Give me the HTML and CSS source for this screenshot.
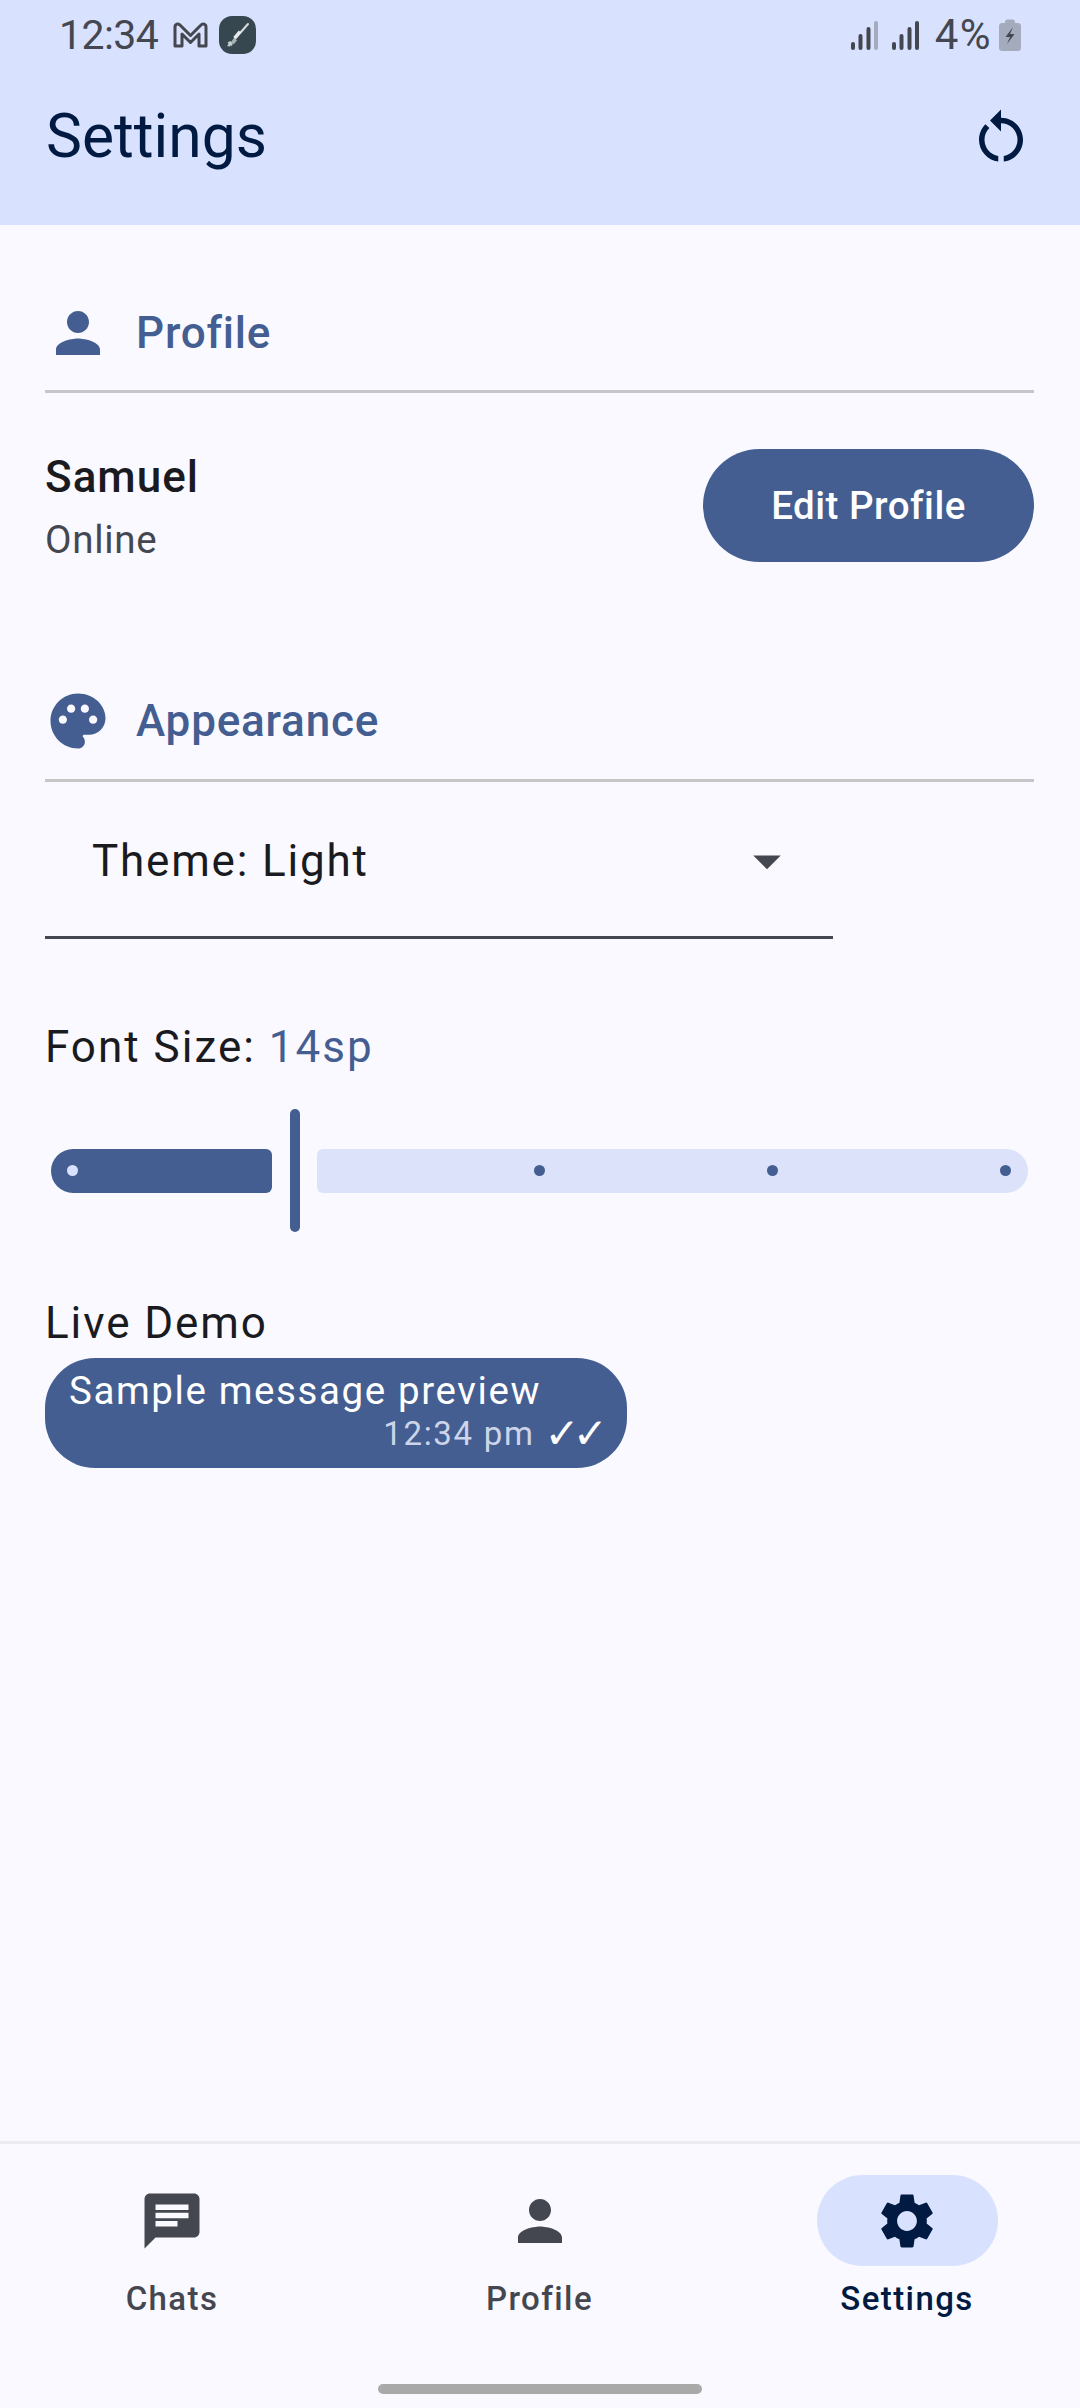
FILE: index.html
```html
<!DOCTYPE html>
<html lang="en">
<head>
<meta charset="utf-8">
<title>Settings</title>
<link rel="stylesheet" href="styles.css">
</head>
<body>
<div class="screen">
  <header class="header">
    <div class="status">
      <div class="status-left">
        <span class="clock">12:34</span>
        <svg class="gmail" viewBox="0 0 35 26"><path d="M2 24V5c0-2.800 3.200-4 5-2l10.500 10.500L28 3c1.800-2 5-.8 5 2v19h-7V12l-8.500 8.500L9 12v12z" fill="none" stroke="#44474f" stroke-width="3" stroke-linejoin="round"/></svg>
        <svg class="rocket" viewBox="0 0 37 38"><rect x="0" y="0" width="37" height="38" rx="13" fill="#37474f"/><path d="M29 8L14.500 24.500" stroke="#d5dcdc" stroke-width="2" stroke-linecap="round"/><path d="M21 15.500L15.500 22" stroke="#e8ecec" stroke-width="3.200"/><path d="M15.500 22l-3.500 4 2.500 2.500 3.500-4z" fill="#a5b2b2"/><path d="M11.500 25l-3 1.500 1 1.500-1.500 2 3 .5 1-1.500 1 1.500.5-3z" fill="#c3cece"/></svg>
      </div>
      <div class="status-right">
        <svg class="signal signal-first" viewBox="0 0 27 29"><rect x="0" y="21" width="4" height="8" rx="2" fill="#44474f"/><rect x="7.500" y="13" width="4" height="16" rx="2" fill="#44474f"/><rect x="15.500" y="6" width="4" height="23" rx="2" fill="#44474f"/><rect x="23" y="0" width="4" height="29" rx="2" fill="#a3abbd"/></svg>
        <svg class="signal" viewBox="0 0 27 29"><rect x="0" y="21" width="4" height="8" rx="2" fill="#44474f"/><rect x="7.500" y="13" width="4" height="16" rx="2" fill="#44474f"/><rect x="15.500" y="6" width="4" height="23" rx="2" fill="#44474f"/><rect x="23" y="0" width="4" height="29" rx="2" fill="#44474f"/></svg>
        <span class="percent">4%</span>
        <svg class="battery" viewBox="0 0 22 32"><path d="M6 3c0-1.500 1-2.500 2.500-2.500h5C15 .5 16 1.500 16 3v1h3c1.500 0 3 1.200 3 3v22c0 1.700-1.300 3-3 3H3c-1.700 0-3-1.300-3-3V7c0-1.800 1.500-3 3-3h3z" fill="#a3abbd"/><path d="M14 8l-7.500 10h4.500l-3 7 7.500-10H11z" fill="#44474f"/></svg>
      </div>
    </div>
    <div class="appbar">
      <h1 class="title">Settings</h1>
      <svg class="icon" viewBox="0 0 24 24"><path fill="#001a41" d="M12 5V2L8 6l4 4V7c3.310 0 6 2.690 6 6 0 2.970-2.170 5.430-5 5.910v2.020c3.950-.49 7-3.850 7-7.930 0-4.420-3.580-8-8-8zm-6 8c0-1.650.67-3.150 1.760-4.240L6.340 7.340C4.900 8.790 4 10.790 4 13c0 4.080 3.050 7.440 7 7.930v-2.020c-2.830-.48-5-2.940-5-5.910z"/></svg>
    </div>
  </header>

  <main class="content">
    <section class="section-head">
      <svg class="icon" viewBox="0 0 24 24"><path fill="#445e91" d="M12 12c2.210 0 4-1.790 4-4s-1.790-4-4-4-4 1.790-4 4 1.790 4 4 4zm0 2c-2.670 0-8 1.340-8 4v2h16v-2c0-2.660-5.330-4-8-4z"/></svg>
      <h2 class="section-title">Profile</h2>
    </section>
    <div class="divider"></div>
    <div class="profile-row">
      <div class="profile-text">
        <div class="profile-name">Samuel</div>
        <div class="profile-status">Online</div>
      </div>
      <button class="edit-button">Edit Profile</button>
    </div>

    <section class="section-head section-head-second">
      <svg class="icon" viewBox="0 0 24 24"><path fill="#445e91" fill-rule="evenodd" d="M12 2C6.490 2 2 6.490 2 12s4.490 10 10 10c1.380 0 2.500-1.120 2.500-2.500 0-.61-.23-1.200-.64-1.670-.08-.1-.13-.21-.13-.33 0-.28.22-.5.5-.5H16c3.310 0 6-2.690 6-6 0-4.960-4.490-9-10-9zm-5.500 11c-.83 0-1.500-.67-1.500-1.500S5.670 10 6.500 10s1.500.67 1.500 1.500S7.330 13 6.500 13zm3-4C8.670 9 8 8.330 8 7.500S8.670 6 9.500 6s1.500.67 1.500 1.500S10.330 9 9.500 9zm5 0c-.83 0-1.500-.67-1.500-1.500S13.670 6 14.500 6s1.500.67 1.500 1.500S15.330 9 14.500 9zm3 4c-.83 0-1.500-.67-1.500-1.500s.67-1.500 1.500-1.500 1.500.67 1.500 1.500-.67 1.500-1.500 1.500z"/></svg>
      <h2 class="section-title">Appearance</h2>
    </section>
    <div class="divider divider-second"></div>
    <div class="select">
      <span class="select-text">Theme: Light</span>
      <svg class="icon" viewBox="0 0 24 24"><path fill="#44474f" d="M7 10l5 5 5-5z"/></svg>
    </div>

    <div class="font-label">Font Size: <span class="font-value">14sp</span></div>
    <div class="slider">
      <div class="track-active"><span class="tick tick-light"></span></div>
      <div class="thumb"></div>
      <div class="track-inactive"><span class="tick"></span><span class="tick"></span><span class="tick"></span></div>
    </div>

    <div class="demo-label">Live Demo</div>
    <div class="bubble">
      <div class="bubble-text">Sample message preview</div>
      <div class="bubble-meta"><span class="bubble-time">12:34 pm</span><span class="bubble-check">✓✓</span></div>
    </div>
  </main>

  <nav class="nav">
    <div class="nav-items">
      <div class="nav-item">
        <div class="nav-pill">
          <svg class="icon" viewBox="0 0 24 24"><path fill="#44474f" d="M20 2H4c-1.100 0-1.990.9-1.990 2L2 22l4-4h14c1.100 0 2-.9 2-2V4c0-1.100-.9-2-2-2zM6 9h12v2H6V9zm8 5H6v-2h8v2zm4-6H6V6h12v2z"/></svg>
        </div>
        <span class="nav-label">Chats</span>
      </div>
      <div class="nav-item">
        <div class="nav-pill">
          <svg class="icon" viewBox="0 0 24 24"><path fill="#44474f" d="M12 12c2.210 0 4-1.790 4-4s-1.790-4-4-4-4 1.790-4 4 1.790 4 4 4zm0 2c-2.670 0-8 1.340-8 4v2h16v-2c0-2.660-5.330-4-8-4z"/></svg>
        </div>
        <span class="nav-label">Profile</span>
      </div>
      <div class="nav-item">
        <div class="nav-pill nav-pill-active">
          <svg class="icon" viewBox="0 0 24 24"><path fill="#001a41" d="M19.140 12.940c.04-.3.06-.61.06-.94 0-.32-.02-.64-.07-.94l2.030-1.580c.18-.14.23-.41.12-.61l-1.920-3.320c-.12-.22-.37-.29-.59-.22l-2.390.96c-.5-.38-1.030-.7-1.620-.94l-.36-2.540c-.04-.24-.24-.41-.48-.41h-3.840c-.24 0-.43.17-.47.41l-.36 2.540c-.59.24-1.130.57-1.620.94l-2.390-.96c-.22-.08-.47 0-.59.22L2.740 8.870c-.12.21-.08.47.12.61l2.030 1.580c-.05.3-.09.63-.09.94s.02.64.07.94l-2.030 1.580c-.18.14-.23.41-.12.61l1.920 3.320c.12.22.37.29.59.22l2.390-.96c.5.38 1.030.7 1.620.94l.36 2.54c.05.24.24.41.48.41h3.840c.24 0 .44-.17.47-.41l.36-2.540c.59-.24 1.130-.56 1.620-.94l2.390.96c.22.08.47 0 .59-.22l1.920-3.320c.12-.22.07-.47-.12-.61l-2.010-1.580zM12 15.600c-1.980 0-3.600-1.620-3.600-3.600s1.620-3.600 3.600-3.600 3.600 1.620 3.600 3.600-1.620 3.600-3.600 3.600z"/></svg>
        </div>
        <span class="nav-label nav-label-active">Settings</span>
      </div>
    </div>
    <div class="home-bar"></div>
  </nav>
</div>
</body>
</html>
```

FILE: styles.css
```css
* { box-sizing: border-box; }
html, body { margin: 0; padding: 0; }
body { font-family: Roboto, "Liberation Sans", sans-serif; background: #faf9ff; color: #1a1b20; }
h1, h2 { margin: 0; font-weight: 400; }

.screen { width: 1080px; height: 2408px; display: flex; flex-direction: column; overflow: hidden; }

.header { height: 225px; background: #d8e2ff; flex: none; }
.status { height: 70px; padding: 0 59px 0 59px; display: flex; justify-content: space-between; align-items: center; color: #44474f; }
.status-left, .status-right { display: flex; align-items: center; }
.clock { font-size: 41px; line-height: 44px; letter-spacing: -0.6px; margin-right: 15px; }
.gmail { width: 35px; height: 26px; margin-right: 11px; }
.rocket { width: 37px; height: 38px; }
.signal { width: 27px; height: 29px; margin-right: 16px; }
.signal-first { margin-right: 14px; }
.percent { font-size: 42px; line-height: 44px; letter-spacing: 1.5px; margin-right: 7px; }
.battery { width: 22px; height: 32px; }

.appbar { height: 134px; padding: 0 46px; display: flex; justify-content: space-between; align-items: center; }
.title { font-size: 60.5px; line-height: 80px; color: #001a41; }
.icon { width: 66px; height: 66px; flex: none; display: block; }

.content { flex: 1; padding: 75px 46px 0 45px; display: flex; flex-direction: column; }
.section-head { display: flex; align-items: center; gap: 25px; height: 66px; }
.section-head-second { margin-top: 121px; }
.section-title { font-size: 44px; line-height: 66px; font-weight: 500; color: #445e91; letter-spacing: 0.8px; }
.divider { height: 3px; margin-top: 24px; background: #c6c6c8; }
.divider-second { margin-top: 25px; }

.profile-row { margin-top: 51px; display: flex; justify-content: space-between; align-items: center; }
.profile-text { display: flex; flex-direction: column; }
.profile-name { font-size: 44px; line-height: 66px; font-weight: 500; letter-spacing: 1px; color: #1a1b20; }
.profile-status { margin-top: 2px; font-size: 38.5px; line-height: 55px; letter-spacing: 0.7px; color: #44474f; }
.edit-button { width: 331px; height: 113px; border: 0; border-radius: 57px; background: #445e91; color: #fff; font-family: inherit; font-size: 38.5px; font-weight: 500; letter-spacing: 0.5px; }

.select { width: 788px; height: 154px; margin-top: 3px; padding: 0 33px 0 47px; border-bottom: 3px solid #44474f; display: flex; justify-content: space-between; align-items: center; }
.select-text { font-size: 44px; letter-spacing: 1.8px; color: #1a1b20; }

.font-label { margin-top: 75px; font-size: 44px; line-height: 66px; letter-spacing: 2px; color: #1a1b20; }
.font-value { color: #445e91; }

.slider { margin-top: 29px; height: 123px; padding: 0 6px; display: flex; align-items: center; }
.track-active { width: 221px; height: 44px; background: #445e91; border-radius: 22px 6px 6px 22px; padding-left: 16px; display: flex; align-items: center; }
.thumb { width: 10px; height: 123px; margin: 0 17px 0 18px; background: #445e91; border-radius: 5px; }
.track-inactive { flex: 1; height: 44px; background: #dce2f9; border-radius: 6px 22px 22px 6px; padding-right: 17px; display: flex; justify-content: flex-end; align-items: center; gap: 222px; }
.tick { width: 11px; height: 11px; border-radius: 50%; background: #445e91; }
.tick-light { background: #d8e2ff; }

.demo-label { margin-top: 58px; font-size: 44px; line-height: 66px; letter-spacing: 1.9px; color: #1a1b20; }
.bubble { margin-top: 2px; width: 582px; height: 110px; padding: 8px 26px 16px 24px; background: #445e91; border-radius: 50px; color: #fff; }
.bubble-text { font-size: 38.5px; line-height: 50px; letter-spacing: 1.6px; }
.bubble-meta { display: flex; justify-content: flex-end; align-items: center; height: 36px; gap: 10px; }
.bubble-time { font-size: 33px; line-height: 36px; letter-spacing: 1.7px; color: #ccd5e9; }
.bubble-check { font-family: "DejaVu Sans", sans-serif; font-size: 42px; line-height: 36px; letter-spacing: -7px; color: #fff; }

.nav { height: 267px; flex: none; border-top: 3px solid #ebebf0; padding-top: 31px; display: flex; flex-direction: column; }
.nav-items { padding: 0 48px 0 47px; display: flex; justify-content: space-between; }
.nav-item { width: 250px; display: flex; flex-direction: column; align-items: center; gap: 11px; }
.nav-pill { width: 181px; height: 91px; border-radius: 46px; display: flex; justify-content: center; align-items: center; }
.nav-pill-active { background: #d8e2ff; }
.nav-label { font-size: 33px; line-height: 44px; font-weight: 500; letter-spacing: 1.4px; color: #44474f; }
.nav-label-active { color: #001a41; }
.home-bar { width: 324px; height: 10px; margin: auto auto 14px; border-radius: 5px; background: #a9a9a9; }
```
